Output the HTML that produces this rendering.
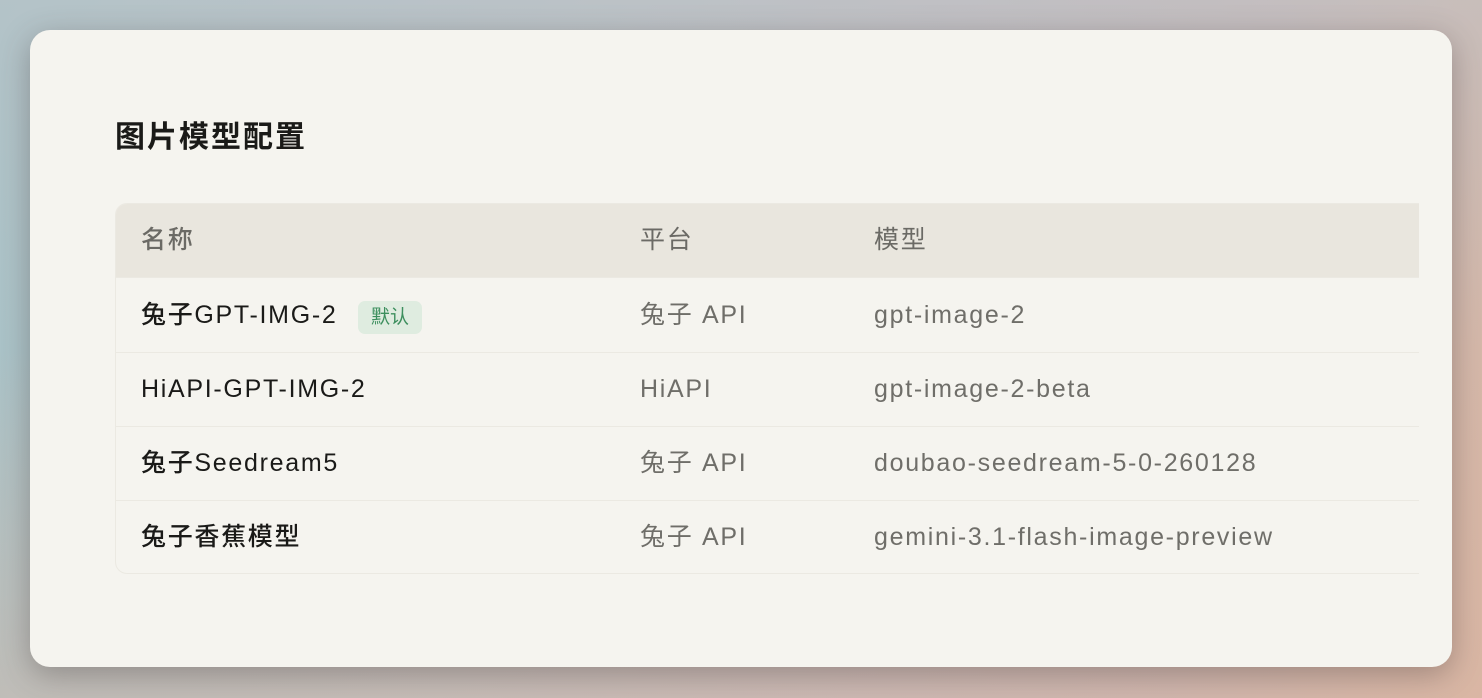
<!DOCTYPE html>
<html><head><meta charset="utf-8"><style>
html,body{margin:0;padding:0;}
body{width:1482px;height:698px;overflow:hidden;position:relative;
background:linear-gradient(100deg,#a9c3c8 0%,#b8c2c6 35%,#c2bcbf 60%,#c9b8b6 80%,#d8b8a6 100%);
font-family:"Liberation Sans","Noto Sans CJK SC",sans-serif;}
.bg2{position:absolute;inset:0;background:linear-gradient(180deg,rgba(190,195,200,0.5) 0%,rgba(0,0,0,0) 50%,rgba(220,180,160,0.4) 100%);}
.card{position:absolute;left:30px;top:30px;width:1422px;height:637px;background:#f5f4ef;border-radius:20px;box-shadow:0 8px 30px rgba(60,50,50,0.35);overflow:hidden;}
h1{position:absolute;left:85px;top:88px;margin:0;font-size:30px;letter-spacing:2px;font-weight:bold;color:#1a1a18;line-height:40px;}
.tbl{position:absolute;left:85px;top:173px;width:1303px;height:369px;border:1px solid #ebe9e2;border-right:none;border-radius:12px 0 0 12px;overflow:hidden;}
.row{position:absolute;left:0;width:1303px;height:74px;border-bottom:1px solid #ebe9e2;font-size:25px;letter-spacing:1.7px;}
.hdr{top:0;background:#e9e6de;color:#6b6a65;height:73px;}
.row span{position:absolute;top:0;line-height:74px;}
.c1{left:25px;color:#1a1a18;font-weight:500;}
.c2{left:524px;color:#6f6e69;}
.c3{left:758px;color:#6f6e69;}
.hdr span{color:#6b6a65;line-height:73px;}
.tag{position:absolute;left:242px;top:23px;width:64px;height:33px;background:#dfece0;border-radius:7px;color:#3d8f5e;font-size:19px;letter-spacing:0;line-height:33px;text-align:center;}
</style></head><body><div class="bg2"></div>
<div class="card">
<h1>图片模型配置</h1>
<div class="tbl">
<div class="row hdr"><span class="c1" style="color:#6b6a65">名称</span><span class="c2">平台</span><span class="c3">模型</span></div>
<div class="row" style="top:74px"><span class="c1">兔子GPT-IMG-2</span><div class="tag">默认</div><span class="c2">兔子 API</span><span class="c3">gpt-image-2</span></div>
<div class="row" style="top:148px"><span class="c1">HiAPI-GPT-IMG-2</span><span class="c2">HiAPI</span><span class="c3">gpt-image-2-beta</span></div>
<div class="row" style="top:222px"><span class="c1">兔子Seedream5</span><span class="c2">兔子 API</span><span class="c3">doubao-seedream-5-0-260128</span></div>
<div class="row" style="top:296px;border-bottom:none"><span class="c1">兔子香蕉模型</span><span class="c2">兔子 API</span><span class="c3">gemini-3.1-flash-image-preview</span></div>
</div>
</div>
</body></html>
